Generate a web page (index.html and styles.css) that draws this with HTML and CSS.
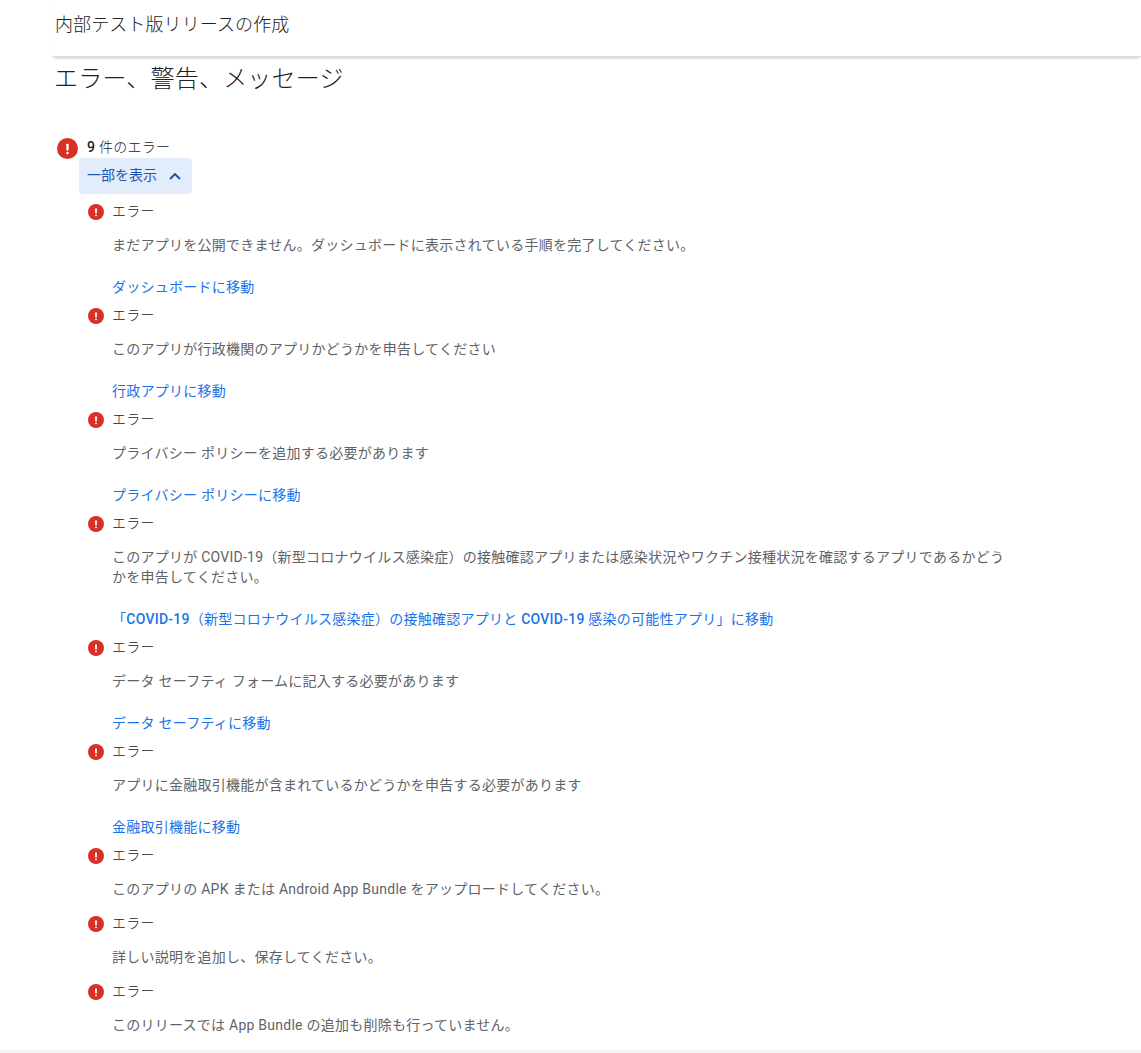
FILE: index.html
```html
<!DOCTYPE html>
<html lang="ja">
<head>
    <meta charset="UTF-8">
    <title>内部テスト版リリースの作成</title>
    <link rel="stylesheet" href="styles.css">
</head>
<body>
    <svg class="defs" width="0" height="0">
        <symbol id="icon-error" viewBox="0 0 20 20">
            <circle cx="10" cy="10" r="10" fill="#d93025"/>
            <rect x="8.9" y="5.4" width="2.2" height="6.4" rx="0.6" fill="#fff"/>
            <rect x="8.9" y="13.2" width="2.2" height="2.2" rx="0.6" fill="#fff"/>
        </symbol>
    </svg>

    <header class="top-bar">内部テスト版リリースの作成</header>

    <main class="content">
        <h1 class="page-title">エラー、警告、メッセージ</h1>

        <div class="summary">
            <svg class="icon-large"><use href="#icon-error"/></svg>
            <span><b class="medium">9</b> 件のエラー</span>
        </div>
        <button class="toggle" type="button">
            一部を表示
            <svg class="chevron" viewBox="0 0 14 10"><path d="M2 8 L7 3 L12 8" fill="none" stroke="#174ea6" stroke-width="1.8"/></svg>
        </button>

        <ul class="issues">
            <li class="issue">
                <div class="issue-head"><svg class="icon-small"><use href="#icon-error"/></svg>エラー</div>
                <p class="issue-text">まだアプリを公開できません。ダッシュボードに表示されている手順を完了してください。</p>
                <a class="issue-link" href="#">ダッシュボードに移動</a>
            </li>
            <li class="issue">
                <div class="issue-head"><svg class="icon-small"><use href="#icon-error"/></svg>エラー</div>
                <p class="issue-text">このアプリが行政機関のアプリかどうかを申告してください</p>
                <a class="issue-link" href="#">行政アプリに移動</a>
            </li>
            <li class="issue">
                <div class="issue-head"><svg class="icon-small"><use href="#icon-error"/></svg>エラー</div>
                <p class="issue-text">プライバシー ポリシーを追加する必要があります</p>
                <a class="issue-link" href="#">プライバシー ポリシーに移動</a>
            </li>
            <li class="issue">
                <div class="issue-head"><svg class="icon-small"><use href="#icon-error"/></svg>エラー</div>
                <p class="issue-text">このアプリが COVID-19（新型コロナウイルス感染症）の接触確認アプリまたは感染状況やワクチン接種状況を確認するアプリであるかどうかを申告してください。</p>
                <a class="issue-link" href="#">「<b class="medium">COVID-19</b>（新型コロナウイルス感染症）の接触確認アプリと <b class="medium">COVID-19</b> 感染の可能性アプリ」に移動</a>
            </li>
            <li class="issue">
                <div class="issue-head"><svg class="icon-small"><use href="#icon-error"/></svg>エラー</div>
                <p class="issue-text">データ セーフティ フォームに記入する必要があります</p>
                <a class="issue-link" href="#">データ セーフティに移動</a>
            </li>
            <li class="issue">
                <div class="issue-head"><svg class="icon-small"><use href="#icon-error"/></svg>エラー</div>
                <p class="issue-text">アプリに金融取引機能が含まれているかどうかを申告する必要があります</p>
                <a class="issue-link" href="#">金融取引機能に移動</a>
            </li>
            <li class="issue">
                <div class="issue-head"><svg class="icon-small"><use href="#icon-error"/></svg>エラー</div>
                <p class="issue-text">このアプリの APK または Android App Bundle をアップロードしてください。</p>
            </li>
            <li class="issue">
                <div class="issue-head"><svg class="icon-small"><use href="#icon-error"/></svg>エラー</div>
                <p class="issue-text">詳しい説明を追加し、保存してください。</p>
            </li>
            <li class="issue">
                <div class="issue-head"><svg class="icon-small"><use href="#icon-error"/></svg>エラー</div>
                <p class="issue-text">このリリースでは App Bundle の追加も削除も行っていません。</p>
            </li>
        </ul>
    </main>

    <div class="bottom-bar"></div>
</body>
</html>
```

FILE: styles.css
```css
*{
    padding: 0;
    margin: 0;
    box-sizing: border-box;
}
html,body{
    height: 100%;
}
body{
    display: flex;
    flex-direction: column;
    font-family: Roboto,"Noto Sans CJK JP",sans-serif;
    font-size: 14px;
    line-height: 20px;
    letter-spacing: .25px;
    color: #3c4043;
    background-color: #fff;
    overflow: hidden;
}
.defs{
    position: absolute;
}
.medium{
    font-weight: 500;
}
.top-bar{
    height: 57px;
    flex: none;
    margin-left: 52px;
    padding: 13px 0 0 3px;
    font-size: 18px;
    line-height: 24px;
    letter-spacing: .1px;
    font-weight: 300;
    color: #202124;
    border-bottom: 1px solid #dadce0;
    box-shadow: 0 3px 3px -2px rgba(60,64,67,0.3);
}
.content{
    flex: 1;
    padding-left: 54px;
    min-height: 0;
}
.page-title{
    margin-top: 4px;
    font-size: 24px;
    line-height: 36px;
    font-weight: 300;
    letter-spacing: .2px;
    color: #202124;
}
.summary{
    display: flex;
    align-items: center;
    margin-top: 40px;
    height: 20px;
    font-weight: 300;
    color: #202124;
}
.icon-large{
    width: 21px;
    height: 21px;
    margin: 2px 9px 0 3px;
}
.toggle{
    display: flex;
    align-items: center;
    width: 113px;
    height: 36px;
    margin: 1px 0 0 25px;
    padding: 0 0 3px 8px;
    border: none;
    border-radius: 4px;
    background-color: #e2ecfb;
    color: #1f57ae;
    font: inherit;
    letter-spacing: 0;
}
.chevron{
    width: 14px;
    height: 10px;
    margin: 3px 0 0 11px;
}
.issues{
    list-style: none;
    margin: 7px 0 0 34px;
}
.issue-head{
    display: flex;
    align-items: center;
    font-weight: 300;
    color: #202124;
}
.icon-small{
    width: 16px;
    height: 16px;
    margin: 2px 8px 0 0;
    flex: none;
}
.issue-text{
    margin: 14px 0 14px 24px;
    width: 895px;
    color: #5f6368;
}
.issue-link{
    display: block;
    margin: 22px 0 8px 24px;
    color: #1a73e8;
    text-decoration: none;
}
.bottom-bar{
    height: 3px;
    flex: none;
    background-color: #f1f3f4;
}
```
